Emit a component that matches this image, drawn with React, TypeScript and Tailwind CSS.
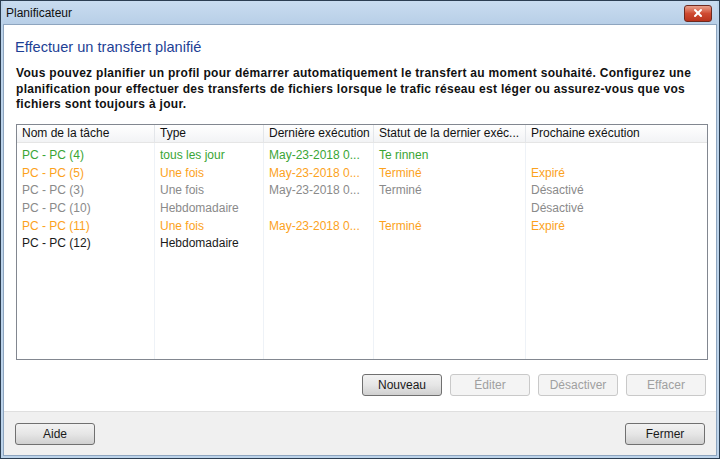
import { X } from 'lucide-react';

type Row = {
  name: string;
  type: string;
  last: string;
  status: string;
  next: string;
  color: string;
};

const ROWS: Row[] = [
  { name: 'PC - PC (4)', type: 'tous les jour', last: 'May-23-2018  0...', status: 'Te rinnen', next: '', color: 'text-[#3aa535]' },
  { name: 'PC - PC (5)', type: 'Une fois', last: 'May-23-2018  0...', status: 'Terminé', next: 'Expiré', color: 'text-[#fca21c]' },
  { name: 'PC - PC (3)', type: 'Une fois', last: 'May-23-2018  0...', status: 'Terminé', next: 'Désactivé', color: 'text-[#8a8a8a]' },
  { name: 'PC - PC (10)', type: 'Hebdomadaire', last: '', status: '', next: 'Désactivé', color: 'text-[#8a8a8a]' },
  { name: 'PC - PC (11)', type: 'Une fois', last: 'May-23-2018  0...', status: 'Terminé', next: 'Expiré', color: 'text-[#fca21c]' },
  { name: 'PC - PC (12)', type: 'Hebdomadaire', last: '', status: '', next: '', color: 'text-[#1a1a1a]' },
];

// column widths in px
const COLS = ['w-[138px]', 'w-[109px]', 'w-[110px]', 'w-[152px]', 'flex-1'];

function WinButton({ label, disabled }: { label: string; disabled?: boolean }) {
  return (
    <button
      className={
        'w-[80px] h-[22px] rounded-[3px] border text-[12px] leading-none ' +
        (disabled
          ? 'border-[#c9c9c9] bg-[#f4f4f4] text-[#a0a0a0]'
          : 'border-[#707070] bg-gradient-to-b from-[#f2f2f2] via-[#e6e6e6] to-[#d0d0d0] text-[#1a1a1a]')
      }
    >
      {label}
    </button>
  );
}

export default function App() {
  return (
    <div
      className="w-[720px] h-[459px] flex flex-col bg-[#2c3e52] p-[1px] overflow-hidden"
      style={{ fontFamily: '"Liberation Sans", Arial, sans-serif' }}
    >
      <div className="flex-1 flex flex-col bg-[#bcd3ea] px-[2px] pb-[2px]">
        {/* Title bar */}
        <div className="h-[23px] flex items-center justify-between pl-[3px] pr-[5px] bg-gradient-to-b from-[#c9dcf0] to-[#b8cfe7]">
          <span className="text-[12px] text-[#101010]">Planificateur</span>
          <div className="w-[28px] h-[17px] mt-[1px] rounded-[3px] border border-[#6e2a20] bg-gradient-to-b from-[#e8a08c] via-[#cf4a31] to-[#b9331c] flex items-center justify-center">
            <X className="w-[12px] h-[12px] text-white" strokeWidth={4} />
          </div>
        </div>

        {/* Body */}
        <div className="flex-1 flex flex-col bg-white border border-[#8ea5bf]">
          <div className="flex-1 flex flex-col px-[11px] pt-[13px]">
            <h1 className="text-[14.6px] leading-[18px] text-[#1d3f95]">Effectuer un transfert planifié</h1>
            <p className="mt-[10px] pl-[1px] text-[12px] leading-[15.5px] font-bold text-[#111] tracking-[0.3px] whitespace-nowrap">
              Vous pouvez planifier un profil pour démarrer automatiquement le transfert au moment souhaité. Configurez une
              <br />
              planification pour effectuer des transferts de fichiers lorsque le trafic réseau est léger ou assurez-vous que vos
              <br />
              fichiers sont toujours à jour.
            </p>

            {/* Table */}
            <div className="mt-[11px] ml-[1px] w-[692px] h-[236px] border border-[#828790] flex flex-col text-[12px]">
              <div className="h-[18px] flex bg-gradient-to-b from-white to-[#f2f3f5] border-b border-[#e5e5e5] text-[#111]">
                {['Nom de la tâche', 'Type', 'Dernière exécution', 'Statut de la dernier exéc...', 'Prochaine exécution'].map((h, i) => (
                  <div
                    key={h}
                    className={COLS[i] + ' px-[5px] flex items-center whitespace-nowrap overflow-hidden ' + (i < 4 ? 'border-r border-[#e3e6ea]' : '')}
                  >
                    {h}
                  </div>
                ))}
              </div>
              <div className="flex-1 flex relative">
                {/* faint column guides */}
                {COLS.map((c, i) => (
                  <div key={i} className={c + ' ' + (i < 4 ? 'border-r border-[#eef2f7]' : '')} />
                ))}
                <div className="absolute inset-0 flex flex-col pt-[4px]">
                  {ROWS.map((r) => (
                    <div key={r.name} className={'h-[17.6px] flex items-center ' + r.color}>
                      {[r.name, r.type, r.last, r.status, r.next].map((v, i) => (
                        <div key={i} className={COLS[i] + ' px-[5px] whitespace-nowrap overflow-hidden'}>
                          {v}
                        </div>
                      ))}
                    </div>
                  ))}
                </div>
              </div>
            </div>

            <div className="mt-[14px] flex justify-end gap-[8px] pr-[1px] w-[692px]">
              <WinButton label="Nouveau" />
              <WinButton label="Éditer" disabled />
              <WinButton label="Désactiver" disabled />
              <WinButton label="Effacer" disabled />
            </div>
          </div>

          {/* Footer */}
          <div className="h-[44px] flex items-center justify-between pl-[11px] pr-[11px] pt-[1px] bg-[#f0f0f0] border-t border-[#dfdfdf]">
            <WinButton label="Aide" />
            <WinButton label="Fermer" />
          </div>
        </div>
      </div>
    </div>
  );
}
